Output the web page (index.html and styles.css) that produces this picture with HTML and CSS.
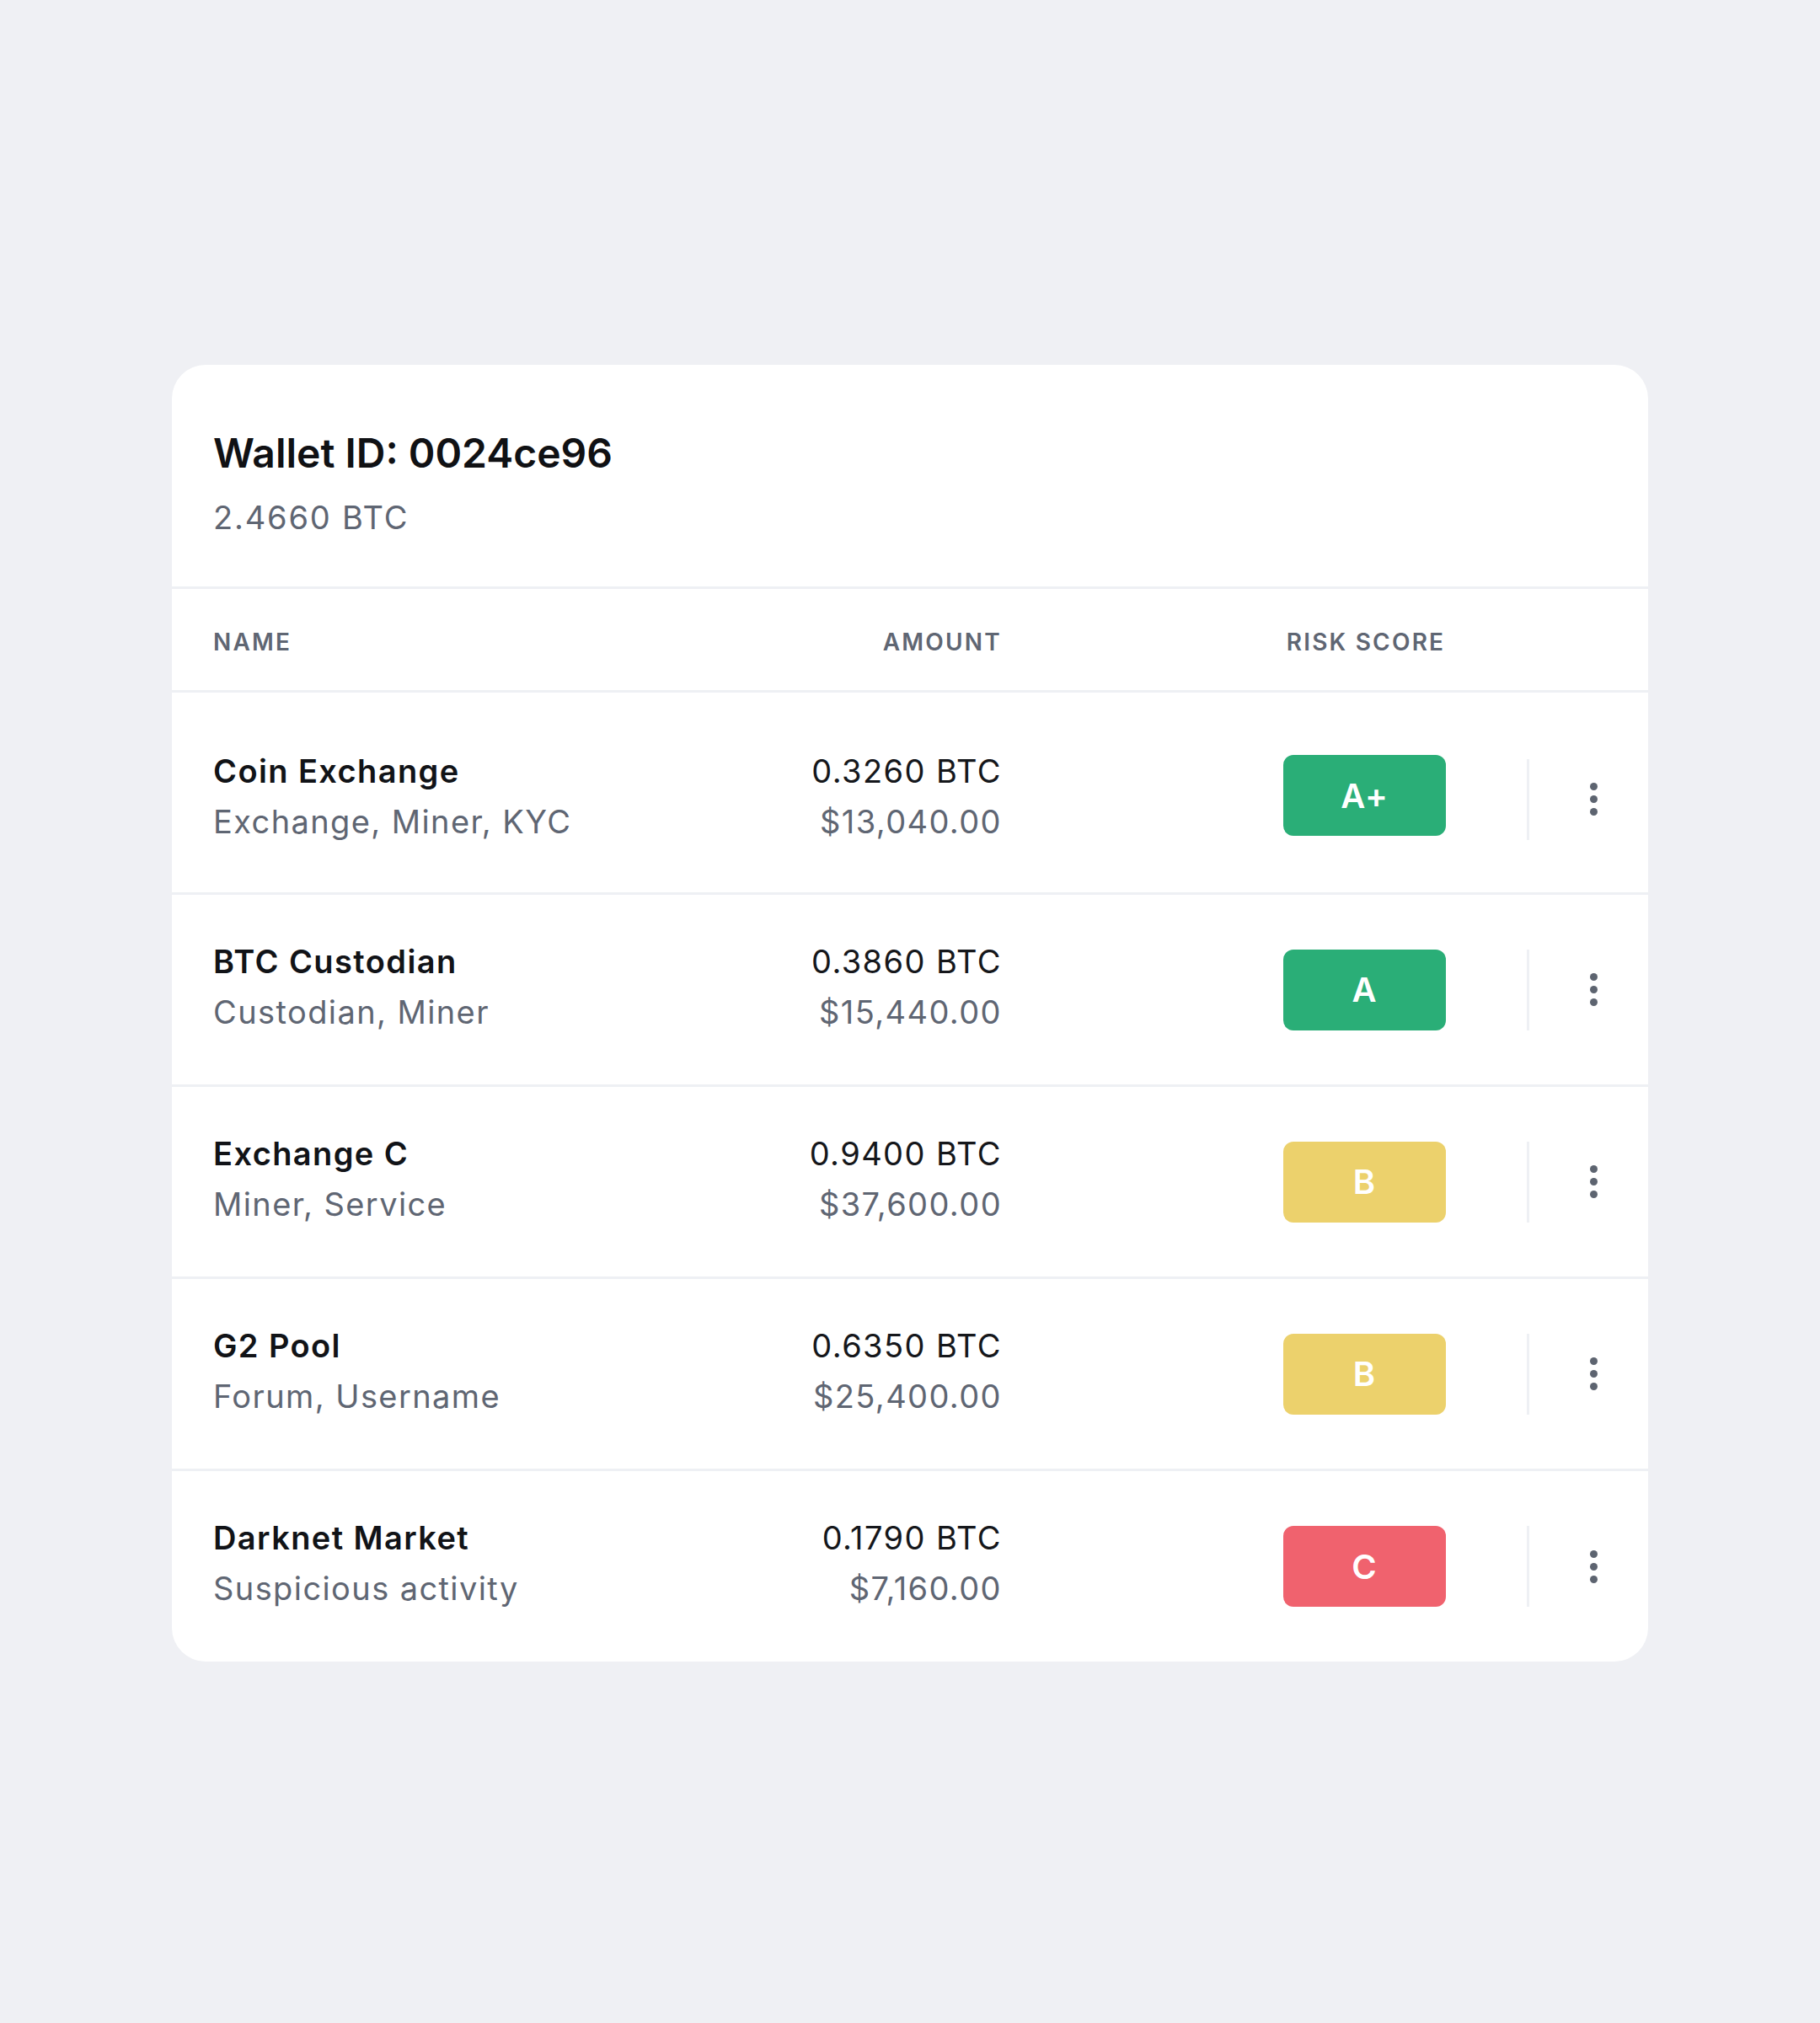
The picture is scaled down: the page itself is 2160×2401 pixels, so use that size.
FILE: index.html
```html
<!DOCTYPE html>
<html lang="en">
<head>
<meta charset="utf-8">
<title>Wallet</title>
<link rel="stylesheet" href="styles.css">
</head>
<body>
<main class="page">
  <section class="card">
    <header class="card-head">
      <h1 class="title">Wallet ID: 0024ce96</h1>
      <p class="balance">2.4660 BTC</p>
    </header>
    <div class="row row-head">
      <div class="col-name">NAME</div>
      <div class="col-amount">AMOUNT</div>
      <div class="col-risk">RISK SCORE</div>
    </div>

    <div class="row row-first">
      <div class="col-name"><div class="name">Coin Exchange</div><div class="sub">Exchange, Miner, KYC</div></div>
      <div class="col-amount"><div class="btc">0.3260 BTC</div><div class="usd">$13,040.00</div></div>
      <div class="col-risk"><span class="badge green">A+</span></div>
      <div class="sep"></div>
      <div class="more"><i></i><i></i><i></i></div>
    </div>

    <div class="row">
      <div class="col-name"><div class="name">BTC Custodian</div><div class="sub">Custodian, Miner</div></div>
      <div class="col-amount"><div class="btc">0.3860 BTC</div><div class="usd">$15,440.00</div></div>
      <div class="col-risk"><span class="badge green">A</span></div>
      <div class="sep"></div>
      <div class="more"><i></i><i></i><i></i></div>
    </div>

    <div class="row">
      <div class="col-name"><div class="name">Exchange C</div><div class="sub">Miner, Service</div></div>
      <div class="col-amount"><div class="btc">0.9400 BTC</div><div class="usd">$37,600.00</div></div>
      <div class="col-risk"><span class="badge yellow">B</span></div>
      <div class="sep"></div>
      <div class="more"><i></i><i></i><i></i></div>
    </div>

    <div class="row">
      <div class="col-name"><div class="name">G2 Pool</div><div class="sub">Forum, Username</div></div>
      <div class="col-amount"><div class="btc">0.6350 BTC</div><div class="usd">$25,400.00</div></div>
      <div class="col-risk"><span class="badge yellow">B</span></div>
      <div class="sep"></div>
      <div class="more"><i></i><i></i><i></i></div>
    </div>

    <div class="row row-last">
      <div class="col-name"><div class="name">Darknet Market</div><div class="sub">Suspicious activity</div></div>
      <div class="col-amount"><div class="btc">0.1790 BTC</div><div class="usd">$7,160.00</div></div>
      <div class="col-risk"><span class="badge red">C</span></div>
      <div class="sep"></div>
      <div class="more"><i></i><i></i><i></i></div>
    </div>
  </section>
</main>
</body>
</html>
```

FILE: styles.css
```css
* { box-sizing: border-box; }
html, body {
  margin: 0;
  padding: 0;
  background: #eff0f4;
}
body {
  font-family: Inter, "Noto Sans", "Liberation Sans", sans-serif;
  color: #15171b;
}
.page {
  padding: 433px 0 0 204px;
  min-height: 2401px;
}
.card {
  width: 1752px;
  background: #ffffff;
  border-radius: 40px;
  overflow: hidden;
}
.card-head {
  padding: 76px 49px 59px;
}
.title {
  margin: 0;
  font-size: 48px;
  line-height: 58px;
  font-weight: 600;
  letter-spacing: 0;
  color: #101114;
}
.balance {
  margin: 24px 0 0;
  font-size: 38px;
  line-height: 46px;
  font-weight: 400;
  letter-spacing: 1.8px;
  color: #5f6673;
}
.row {
  display: flex;
  align-items: center;
  height: 228px;
  padding-left: 49px;
  border-top: 3px solid #eef0f4;
}
.row-head {
  height: 123px;
  padding-top: 6px;
  font-size: 28px;
  line-height: 34px;
  font-weight: 600;
  color: #5f6673;
  letter-spacing: 2.2px;
}
.row-first {
  height: 240px;
  padding-top: 16px;
}
.row-last {
  height: 229px;
}
.col-name {
  width: 600px;
}
.col-amount {
  width: 336px;
  text-align: right;
}
.row .col-name,
.row .col-amount {
  padding-bottom: 8px;
}
.row-head .col-name,
.row-head .col-amount {
  padding-bottom: 0;
}
.row-first .col-risk {
  padding-bottom: 9px;
}
.col-risk {
  width: 193px;
  margin-left: 334px;
  text-align: center;
  white-space: nowrap;
}
.row-head .col-risk {
  margin-left: 332px;
  width: 200px;
}
.name, .btc, .sub, .usd {
  font-size: 38px;
  line-height: 60px;
  letter-spacing: 1.4px;
}
.name {
  font-weight: 600;
  color: #111317;
}
.btc {
  color: #15171b;
}
.sub, .usd {
  color: #5f6673;
}
.badge {
  display: flex;
  align-items: center;
  justify-content: center;
  width: 193px;
  height: 96px;
  border-radius: 12px;
  color: #ffffff;
  font-size: 40px;
  font-weight: 600;
  letter-spacing: 1px;
}
.green { background: #2aae77; }
.yellow { background: #ecd16c; }
.red { background: #f0626e; }
.sep {
  width: 3px;
  height: 96px;
  margin-left: 96px;
  background: #eef0f4;
}
.more {
  display: flex;
  flex-direction: column;
  align-items: center;
  gap: 6px;
  width: 28px;
  margin-left: 62px;
}
.more i {
  display: block;
  width: 9px;
  height: 9px;
  border-radius: 50%;
  background: #5d6470;
}
```
